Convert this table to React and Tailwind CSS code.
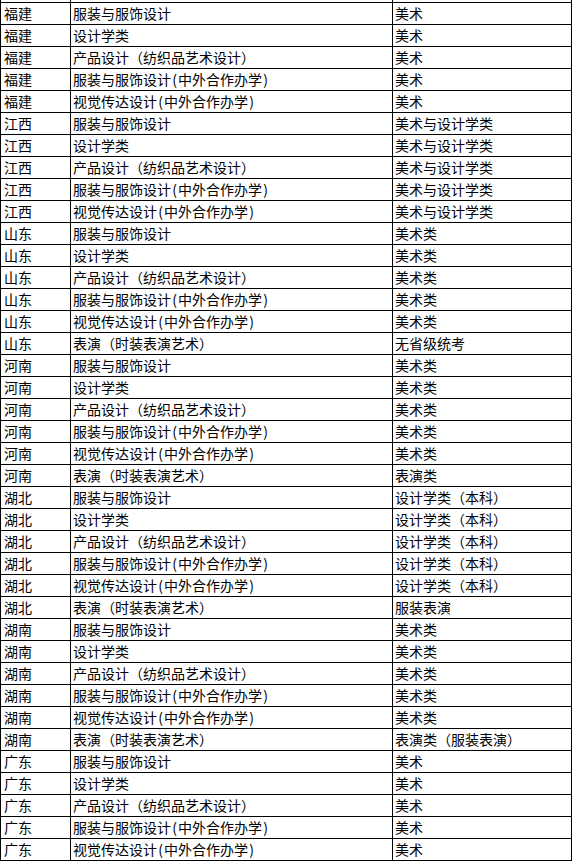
const rows = [
  ['福建', '服装与服饰设计', '美术'],
  ['福建', '设计学类', '美术'],
  ['福建', '产品设计（纺织品艺术设计）', '美术'],
  ['福建', '服装与服饰设计(中外合作办学)', '美术'],
  ['福建', '视觉传达设计(中外合作办学)', '美术'],
  ['江西', '服装与服饰设计', '美术与设计学类'],
  ['江西', '设计学类', '美术与设计学类'],
  ['江西', '产品设计（纺织品艺术设计）', '美术与设计学类'],
  ['江西', '服装与服饰设计(中外合作办学)', '美术与设计学类'],
  ['江西', '视觉传达设计(中外合作办学)', '美术与设计学类'],
  ['山东', '服装与服饰设计', '美术类'],
  ['山东', '设计学类', '美术类'],
  ['山东', '产品设计（纺织品艺术设计）', '美术类'],
  ['山东', '服装与服饰设计(中外合作办学)', '美术类'],
  ['山东', '视觉传达设计(中外合作办学)', '美术类'],
  ['山东', '表演（时装表演艺术）', '无省级统考'],
  ['河南', '服装与服饰设计', '美术类'],
  ['河南', '设计学类', '美术类'],
  ['河南', '产品设计（纺织品艺术设计）', '美术类'],
  ['河南', '服装与服饰设计(中外合作办学)', '美术类'],
  ['河南', '视觉传达设计(中外合作办学)', '美术类'],
  ['河南', '表演（时装表演艺术）', '表演类'],
  ['湖北', '服装与服饰设计', '设计学类（本科）'],
  ['湖北', '设计学类', '设计学类（本科）'],
  ['湖北', '产品设计（纺织品艺术设计）', '设计学类（本科）'],
  ['湖北', '服装与服饰设计(中外合作办学)', '设计学类（本科）'],
  ['湖北', '视觉传达设计(中外合作办学)', '设计学类（本科）'],
  ['湖北', '表演（时装表演艺术）', '服装表演'],
  ['湖南', '服装与服饰设计', '美术类'],
  ['湖南', '设计学类', '美术类'],
  ['湖南', '产品设计（纺织品艺术设计）', '美术类'],
  ['湖南', '服装与服饰设计(中外合作办学)', '美术类'],
  ['湖南', '视觉传达设计(中外合作办学)', '美术类'],
  ['湖南', '表演（时装表演艺术）', '表演类（服装表演）'],
  ['广东', '服装与服饰设计', '美术'],
  ['广东', '设计学类', '美术'],
  ['广东', '产品设计（纺织品艺术设计）', '美术'],
  ['广东', '服装与服饰设计(中外合作办学)', '美术'],
  ['广东', '视觉传达设计(中外合作办学)', '美术'],
];

// half-width parens are wider in the source font, give them a fixed box
function Major({ text }) {
  const parts = text.split(/([()])/);
  return parts.map((p, i) =>
    p === '(' || p === ')' ? (
      <span key={i} className="inline-block w-[7px] text-center">{p}</span>
    ) : (
      <span key={i}>{p}</span>
    )
  );
}

function Row({ cells, className }) {
  return (
    <div className={`flex border-b border-black ${className}`}>
      <div className="w-[70px] shrink-0 border-r border-black pl-[3px]">{cells[0]}</div>
      <div className="w-[322px] shrink-0 border-r border-black pl-[2px]">
        <Major text={cells[1]} />
      </div>
      <div className="w-[179px] shrink-0 border-r border-black pl-[2px]">{cells[2]}</div>
    </div>
  );
}

export default function App() {
  return (
    <div className="min-h-screen bg-white text-black text-[14px] leading-[21px] font-['Noto_Sans_CJK_SC','Noto_Sans',sans-serif]">
      <div className="w-[572px] border-l border-black">
        {/* row cut off above the picture */}
        <Row cells={['', '', '']} className="h-[3px]" />
        {rows.map((r, i) => (
          <Row key={i} cells={r} className="h-[22px]" />
        ))}
      </div>
    </div>
  );
}
